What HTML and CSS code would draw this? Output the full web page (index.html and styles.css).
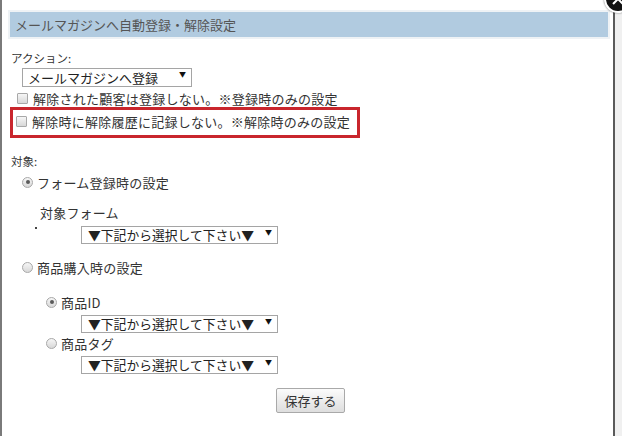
FILE: index.html
```html
<!DOCTYPE html>
<html lang="ja">
<head>
    <meta charset="UTF-8">
    <meta name="viewport" content="width=device-width, initial-scale=1.0">
    <title>メールマガジンへ自動登録・解除設定</title>
    <link rel="stylesheet" href="styles.css">
</head>
<body>
    <div class="dialog">
        <span class="close-btn"></span>
        <div class="dialog-title">メールマガジンへ自動登録・解除設定</div>

        <div class="content">
            <div class="label action-label">アクション:</div>
            <div class="select-wrap action-select">
                <select class="select">
                    <option>メールマガジンへ登録</option>
                </select>
            </div>
            <label class="check-row first-check">
                <input type="checkbox" class="check">
                <span>解除された顧客は登録しない。※登録時のみの設定</span>
            </label>
            <div class="highlight">
                <label class="check-row">
                    <input type="checkbox" class="check">
                    <span>解除時に解除履歴に記録しない。※解除時のみの設定</span>
                </label>
            </div>

            <div class="label target-label">対象:</div>
            <label class="radio-row form-radio">
                <input type="radio" name="target" class="radio" checked>
                <span>フォーム登録時の設定</span>
            </label>
            <div class="sub-label">対象フォーム</div>
            <div class="form-select-row">
                <span class="dot"></span>
                <div class="select-wrap">
                    <select class="select wide">
                        <option>▼下記から選択して下さい▼</option>
                    </select>
                </div>
            </div>

            <label class="radio-row buy-radio">
                <input type="radio" name="target" class="radio">
                <span>商品購入時の設定</span>
            </label>
            <label class="radio-row item-radio id-radio">
                <input type="radio" name="item" class="radio" checked>
                <span>商品ID</span>
            </label>
            <div class="select-wrap item-select">
                <select class="select wide">
                    <option>▼下記から選択して下さい▼</option>
                </select>
            </div>
            <label class="radio-row item-radio tag-radio">
                <input type="radio" name="item" class="radio">
                <span>商品タグ</span>
            </label>
            <div class="select-wrap item-select">
                <select class="select wide">
                    <option>▼下記から選択して下さい▼</option>
                </select>
            </div>

            <button class="save-btn">保存する</button>
        </div>
    </div>
</body>
</html>
```

FILE: styles.css
```css
body {
    margin: 0;
    padding: 0;
    background: #f0f0f0;
    font-family: 'Noto Sans CJK JP', 'Noto Sans', sans-serif;
    color: #333333;
    overflow: hidden;
}

.dialog {
    position: relative;
    width: 615px;
    height: 436px;
    padding-top: 12px;
    box-sizing: border-box;
    background: #ffffff;
    border-left: 2px solid #7a7a7a;
    border-right: 2px solid #5a5a5a;
}

/* close button, mostly outside the window */
.close-btn {
    position: absolute;
    top: -15px;
    right: -19px;
    width: 24px;
    height: 24px;
    border-radius: 50%;
    background: #111111;
    border: 2px solid #ffffff;
    box-shadow: 0 0 2px rgba(0, 0, 0, 0.6);
}

.close-btn::before,
.close-btn::after {
    content: "";
    position: absolute;
    left: 5px;
    top: 11px;
    width: 14px;
    height: 2px;
    background: #ffffff;
    transform: rotate(45deg);
}

.close-btn::after {
    transform: rotate(-45deg);
}

.dialog-title {
    margin: 0 5px 0 8px;
    height: 25px;
    padding-left: 5px;
    background: #b1cbe0;
    outline: 2px solid #eef2f5;
    color: #555555;
    font-size: 13px;
    line-height: 25px;
}

.content {
    padding-left: 9px;
}

.label {
    font-size: 11.5px;
    line-height: 16px;
}

.action-label {
    margin-top: 13px;
}

.select-wrap {
    position: relative;
}

.select-wrap::after {
    content: "▼";
    position: absolute;
    right: 6px;
    top: 1px;
    font-size: 7px;
    line-height: 10px;
    color: #111111;
    pointer-events: none;
}

.select {
    appearance: none;
    -webkit-appearance: none;
    display: block;
    height: 19px;
    margin: 0;
    padding: 0 16px 0 5px;
    border: 1px solid #a5a5a5;
    border-radius: 0;
    background: #ffffff;
    color: #222222;
    font-family: 'Noto Sans CJK JP', 'Noto Sans', sans-serif;
    font-size: 13px;
    line-height: 17px;
}

.action-select {
    width: 170px;
    margin: 2px 0 0 11px;
}

.action-select .select {
    width: 170px;
}

.select.wide {
    width: 197px;
    height: 18px;
    padding-left: 6px;
    font-size: 12.8px;
    line-height: 16px;
}

.check-row,
.radio-row {
    display: flex;
    align-items: center;
    height: 18px;
    font-size: 13px;
    letter-spacing: 0.25px;
    white-space: nowrap;
}

.check,
.radio {
    appearance: none;
    -webkit-appearance: none;
    flex: none;
    width: 11px;
    height: 11px;
    margin: 0;
    border: 1px solid #a8a8a8;
    background: linear-gradient(#f6f6f6, #d8d8d8);
    box-sizing: border-box;
}

.check {
    border-radius: 1px;
    margin-right: 5px;
}

.radio {
    border-radius: 50%;
    margin-right: 4px;
    position: relative;
}

.radio:checked::after {
    content: "";
    position: absolute;
    left: 2.5px;
    top: 2.5px;
    width: 4px;
    height: 4px;
    border-radius: 50%;
    background: #5a5a5a;
}

.first-check {
    margin: 2px 0 0 6px;
}

.highlight {
    width: 350px;
    height: 31px;
    margin-left: -1px;
    padding: 2px 0 0 3px;
    box-sizing: border-box;
    border: 3px solid #c9262d;
}

.target-label {
    margin-top: 15px;
}

.form-radio {
    margin: 4px 0 0 11px;
}

.sub-label {
    margin-top: 13px;
    padding-left: 29px;
    font-size: 13px;
    line-height: 18px;
    letter-spacing: 0.2px;
}

.form-select-row {
    display: flex;
    align-items: flex-start;
    margin-top: 4px;
}

.dot {
    flex: none;
    width: 2px;
    height: 2px;
    margin: 1px 44px 0 24px;
    background: #444444;
}

.buy-radio {
    margin: 14px 0 0 11px;
}

.item-radio {
    margin-left: 35px;
}

.id-radio {
    margin-top: 17px;
}

.tag-radio {
    margin-top: 1px;
}

.item-select {
    width: 197px;
    margin: 4px 0 0 70px;
}

.save-btn {
    display: block;
    width: 69px;
    height: 25px;
    margin: 14px 0 0 265px;
    padding: 0;
    border: 1px solid #a9a9a9;
    border-radius: 2px;
    background: linear-gradient(#fbfbfb, #dedede);
    color: #333333;
    font-family: 'Noto Sans CJK JP', 'Noto Sans', sans-serif;
    font-size: 13px;
    cursor: pointer;
}
```
